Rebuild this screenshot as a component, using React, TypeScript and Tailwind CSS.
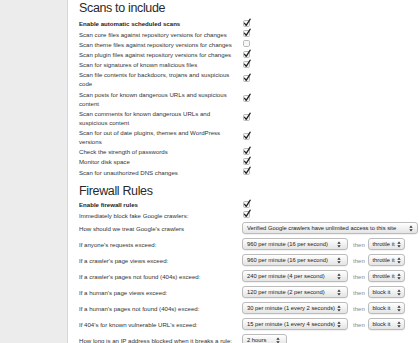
import React from "react";

type ScanRow = { label: string; bold?: boolean; checked: boolean };

const scanRows: ScanRow[] = [
  { label: "Enable automatic scheduled scans", bold: true, checked: true },
  { label: "Scan core files against repository versions for changes", checked: true },
  { label: "Scan theme files against repository versions for changes", checked: false },
  { label: "Scan plugin files against repository versions for changes", checked: true },
  { label: "Scan for signatures of known malicious files", checked: true },
  { label: "Scan file contents for backdoors, trojans and suspicious code", checked: true },
  { label: "Scan posts for known dangerous URLs and suspicious content", checked: true },
  { label: "Scan comments for known dangerous URLs and suspicious content", checked: true },
  { label: "Scan for out of date plugins, themes and WordPress versions", checked: true },
  { label: "Check the strength of passwords", checked: true },
  { label: "Monitor disk space", checked: true },
  { label: "Scan for unauthorized DNS changes", checked: true },
];

const rateRows = [
  { label: "If anyone's requests exceed:", rate: "960 per minute (16 per second)", action: "throttle it" },
  { label: "If a crawler's page views exceed:", rate: "960 per minute (16 per second)", action: "throttle it" },
  { label: "If a crawler's pages not found (404s) exceed:", rate: "240 per minute (4 per second)", action: "throttle it" },
  { label: "If a human's page views exceed:", rate: "120 per minute (2 per second)", action: "block it" },
  { label: "If a human's pages not found (404s) exceed:", rate: "30 per minute (1 every 2 seconds)", action: "block it" },
  { label: "If 404's for known vulnerable URL's exceed:", rate: "15 per minute (1 every 4 seconds)", action: "block it" },
];

function Checkbox({ checked }: { checked: boolean }) {
  return (
    <div className="h-[8px] w-[10px] flex items-center">
      <svg width="10" height="10" viewBox="0 0 10 10" className="block -mt-[2px]">
        <rect x="1.5" y="2.5" width="6" height="6" rx="1.2" fill="#f7f7f7" stroke="#a9a9a9" strokeWidth="0.8" />
        {checked && (
          <path d="M2.6 5.3 L4.2 7.3 L8.2 1.2" fill="none" stroke="#1f1f1f" strokeWidth="1.3" strokeLinecap="round" strokeLinejoin="round" />
        )}
      </svg>
    </div>
  );
}

function Arrows() {
  return (
    <svg width="4" height="7" viewBox="0 0 4 7" className="block shrink-0">
      <path d="M0.3 2.8 L2 0.6 L3.7 2.8 Z" fill="#333" />
      <path d="M0.3 4.2 L2 6.4 L3.7 4.2 Z" fill="#333" />
    </svg>
  );
}

function Select({ text, width, pad }: { text: string; width: string; pad: string }) {
  return (
    <div
      className={`${width} ${pad} h-[12px] shrink-0 rounded-[3px] border border-[#bcbcbc] bg-gradient-to-b from-white to-[#e4e4e4] flex items-center shadow-[0_0.5px_0.5px_rgba(0,0,0,0.12)]`}
    >
      <span className="flex-1 whitespace-nowrap leading-[9px] text-[5.8px] text-[#222]">{text}</span>
      <Arrows />
    </div>
  );
}

export default function App() {
  return (
    <div
      className="flex w-[420px] h-[343px] overflow-hidden bg-[#ececec] text-[#333] text-[6.1px]"
      style={{ fontFamily: '"Liberation Sans", Arial, Helvetica, sans-serif' }}
    >
      <div className="w-[67px] shrink-0" />
      <div className="flex-1 bg-white border-l border-[#d6d6d6] pl-[11px] pr-[2px]">
        <h2 className="text-[12.5px] leading-[14px] tracking-[-0.35px] text-[#2a2a2a] pt-[1.4px] mb-[3.5px]">
          Scans to include
        </h2>
        {scanRows.map((r, i) => (
          <div key={i} className="flex items-center py-[0.6px]">
            <div className={`w-[163px] pr-[5px] leading-[9px] ${r.bold ? "font-bold text-[#222]" : ""}`}>{r.label}</div>
            <Checkbox checked={r.checked} />
          </div>
        ))}
        <h2 className="text-[12.5px] leading-[14px] tracking-[-0.35px] text-[#2a2a2a] mt-[6.6px] mb-[2px]">
          Firewall Rules
        </h2>
        <div className="flex items-center py-[0.6px]">
          <div className="w-[163px] pr-[5px] leading-[9px] font-bold text-[#222]">Enable firewall rules</div>
          <Checkbox checked />
        </div>
        <div className="flex items-center py-[0.6px]">
          <div className="w-[163px] pr-[5px] leading-[9px]">Immediately block fake Google crawlers:</div>
          <Checkbox checked />
        </div>
        <div className="flex items-center h-[16px]">
          <div className="w-[163px] pr-[5px] leading-[9px]">How should we treat Google's crawlers</div>
          <Select text="Verified Google crawlers have unlimited access to this site" width="w-[176px]" pad="pl-[4px] pr-[4px]" />
        </div>
        {rateRows.map((r, i) => (
          <div key={i} className="flex items-center h-[16px]">
            <div className="w-[163px] pr-[5px] leading-[9px]">{r.label}</div>
            <Select text={r.rate} width="w-[106px]" pad="pl-[4px] pr-[6px]" />
            <span className="ml-[5px] mr-[3.5px] text-[#8a8a8a]">then</span>
            <Select text={r.action} width="w-[37px]" pad="pl-[3px] pr-[3px]" />
          </div>
        ))}
        <div className="flex items-center h-[16px]">
          <div className="w-[163px] pr-[5px] leading-[9px]">How long is an IP address blocked when it breaks a rule:</div>
          <Select text="2 hours" width="w-[45px]" pad="pl-[4px] pr-[6px]" />
        </div>
      </div>
    </div>
  );
}
